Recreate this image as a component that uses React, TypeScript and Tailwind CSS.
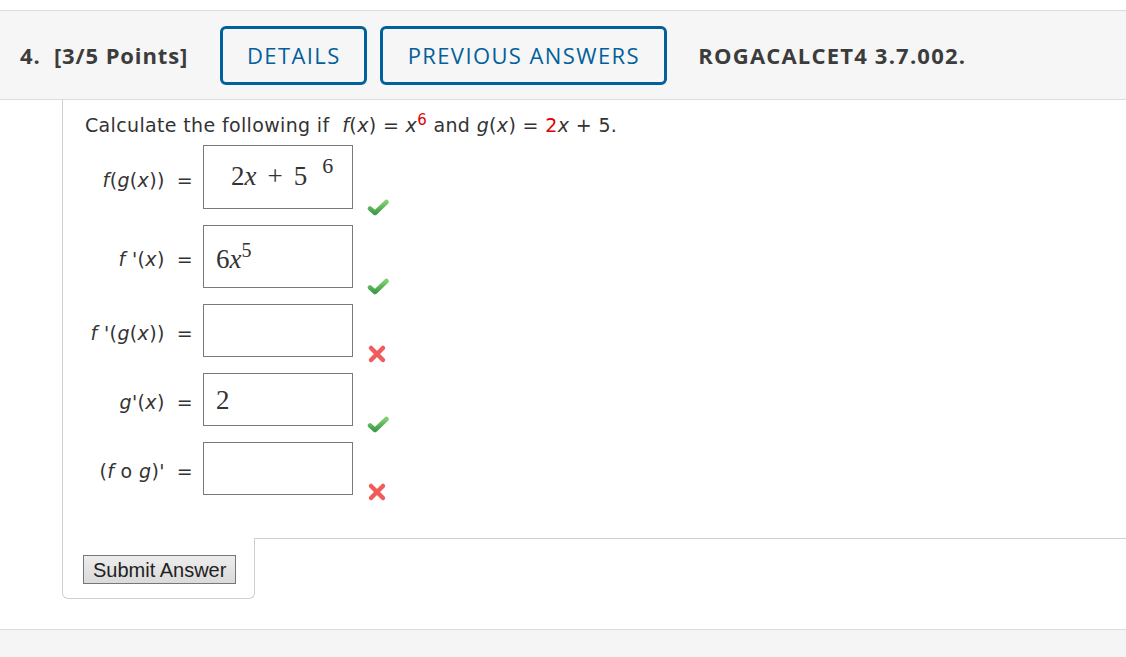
import React from 'react';

const sans = { fontFamily: '"Open Sans", "Noto Sans", sans-serif' };
const verdana = { fontFamily: '"DejaVu Sans", Verdana, sans-serif' };
const mathFont = { fontFamily: '"Liberation Serif", "DejaVu Serif", serif' };

const CheckMark: React.FC = () => (
  <svg width="22" height="17" viewBox="0 0 22 17">
    <defs>
      <linearGradient id="ck" x1="0" y1="0" x2="0" y2="1">
        <stop offset="0" stopColor="#7fcf72" />
        <stop offset="1" stopColor="#3f9c46" />
      </linearGradient>
    </defs>
    <path d="M3 9.5 L8 14 L19.5 3" fill="none" stroke="url(#ck)" strokeWidth="4.5" strokeLinecap="round" strokeLinejoin="round" />
  </svg>
);

const CrossMark: React.FC = () => (
  <svg width="20" height="20" viewBox="0 0 20 20">
    <path d="M4 4 L16 16 M16 4 L4 16" fill="none" stroke="#f25b5b" strokeWidth="4.5" strokeLinecap="round" />
  </svg>
);

type Row = {
  label: React.ReactNode;
  height: string;
  content?: React.ReactNode;
  ok: boolean;
};

const rows: Row[] = [
  {
    label: <><i>f</i>(<i>g</i>(<i>x</i>))</>,
    height: 'h-[64px]',
    content: (
      <div className="pl-[27px] pt-[17px] text-[27px] leading-none">
        2<i>x</i>
        <span className="mx-[11px]">+</span>5
        <span className="relative -top-[12px] ml-[15px] text-[22px]">6</span>
      </div>
    ),
    ok: true,
  },
  {
    label: <><i>f</i> '(<i>x</i>)</>,
    height: 'h-[63px]',
    content: (
      <div className="pl-[12px] pt-[20px] text-[27px] leading-none">
        6<i>x</i>
        <span className="relative -top-[11px] text-[20px]">5</span>
      </div>
    ),
    ok: true,
  },
  { label: <><i>f</i> '(<i>g</i>(<i>x</i>))</>, height: 'h-[53px]', ok: false },
  {
    label: <><i>g</i>'(<i>x</i>)</>,
    height: 'h-[53px]',
    content: <div className="pl-[12px] pt-[13px] text-[27px] leading-none">2</div>,
    ok: true,
  },
  { label: <>(<i>f</i> o <i>g</i>)'</>, height: 'h-[53px]', ok: false },
];

const App: React.FC = () => {
  return (
    <div className="w-[1126px] h-[657px] bg-white overflow-hidden" style={sans}>
      <div className="h-[10px]" />
      {/* Header */}
      <div className="h-[90px] bg-[#f6f6f6] border-y border-[#dcdcdc] flex items-center pl-[20px] text-[#3c3c3c]">
        <span className="text-[22px] font-bold tracking-[0.9px] mr-[32px]">4.&nbsp; [3/5 Points]</span>
        <button className="h-[59px] w-[147px] border-[3px] border-[#02609b] rounded-[6px] text-[#02609b] text-[22px] tracking-[1.4px] mr-[13px]">
          DETAILS
        </button>
        <button className="h-[59px] w-[287px] border-[3px] border-[#02609b] rounded-[6px] text-[#02609b] text-[22px] tracking-[1.4px] mr-[31px]">
          PREVIOUS ANSWERS
        </button>
        <span className="text-[22px] font-bold tracking-[1.2px]">ROGACALCET4 3.7.002.</span>
      </div>

      {/* Body */}
      <div className="ml-[62px]">
        <div className="border-l border-[#cfcfcf] h-[438px] pl-[22px] pt-[12px] text-[#333]" style={verdana}>
          <p className="text-[19px] tracking-[0.35px] leading-[26px]">
            Calculate the following if&nbsp; <i>f</i>(<i>x</i>) = <i>x</i>
            <sup className="text-[#e00000] text-[15px]">6</sup> and <i>g</i>(<i>x</i>) ={' '}
            <span className="text-[#e00000]">2</span><i>x</i> + 5.
          </p>
          <div className="mt-[7px] flex flex-col gap-[16px]">
            {rows.map((r, i) => (
              <div key={i} className="flex items-stretch">
                <div className="w-[110px] flex items-center justify-end text-[19px] tracking-[0.35px] pr-[2px] pt-[6px]">
                  <span>{r.label}</span>
                  <span className="ml-[12px]">=</span>
                </div>
                <div className={`ml-[8px] w-[150px] ${r.height} border border-[#7a7a7a] bg-white text-[#333]`} style={mathFont}>
                  {r.content}
                </div>
                <div className="ml-[14px] self-end translate-y-[7px]">
                  {r.ok ? <CheckMark /> : <CrossMark />}
                </div>
              </div>
            ))}
          </div>
        </div>
        <div className="flex">
          <div className="w-[193px] h-[61px] border-l border-r border-b border-[#cfcfcf] rounded-b-[6px] pl-[20px] pt-[17px]">
            <button
              className="h-[29px] px-[9px] border border-[#767676] bg-gradient-to-b from-[#ededed] to-[#dadada] text-[20px] leading-none text-[#222]"
              style={{ fontFamily: '"Liberation Sans", Arial, sans-serif' }}
            >
              Submit Answer
            </button>
          </div>
          <div className="flex-1 border-t border-[#cfcfcf]" />
        </div>
      </div>

      <div className="mt-[30px] h-[40px] bg-[#f5f5f5] border-t border-[#dcdcdc]" />
    </div>
  );
};

export default App;
